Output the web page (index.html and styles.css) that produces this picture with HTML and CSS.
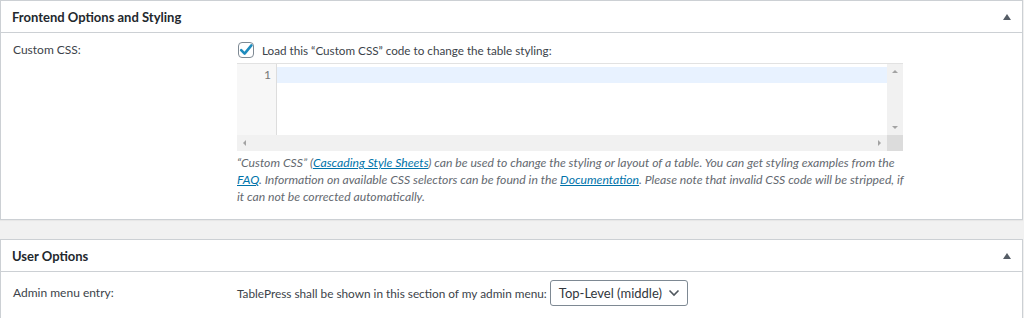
FILE: index.html
```html
<!DOCTYPE html>
<html lang="en">
<head>
    <meta charset="UTF-8">
    <title>TablePress Options</title>
    <link rel="stylesheet" href="styles.css">
</head>
<body>
    <div class="postbox box-frontend">
        <div class="postbox-header">
            <h2>Frontend Options and Styling</h2>
            <span class="toggle-arrow"></span>
        </div>
        <div class="inside">
            <div class="option-row">
                <div class="option-label">Custom CSS:</div>
                <div class="option-value">
                    <label class="check-line">
                        <span class="checkbox">
                            <svg width="16" height="16" viewBox="0 0 16 16"><path d="M3.2 8.2 L6.6 11.6 L13.4 3.4" fill="none" stroke="#1e8cbe" stroke-width="2.6" stroke-linecap="round" stroke-linejoin="round"/></svg>
                        </span>
                        Load this &ldquo;Custom CSS&rdquo; code to change the table styling:
                    </label>
                    <div class="code-editor">
                        <div class="editor-main">
                            <div class="gutter"><div class="line-number">1</div></div>
                            <div class="code-area"><div class="active-line"></div></div>
                            <div class="vscroll">
                                <span class="arrow arrow-up"></span>
                                <span class="arrow arrow-down"></span>
                            </div>
                        </div>
                        <div class="hscroll">
                            <div class="hscroll-track">
                                <span class="arrow arrow-left"></span>
                                <span class="arrow arrow-right"></span>
                            </div>
                            <div class="scroll-corner"></div>
                        </div>
                    </div>
                    <p class="description">
                        &ldquo;Custom CSS&rdquo; (<a href="#">Cascading Style Sheets</a>) can be used to change the styling or layout of a table. You can get styling examples from the<br>
                        <a href="#">FAQ</a>. Information on available CSS selectors can be found in the <a href="#">Documentation</a>. Please note that invalid CSS code will be stripped, if<br>
                        it can not be corrected automatically.
                    </p>
                </div>
            </div>
        </div>
    </div>

    <div class="postbox box-user">
        <div class="postbox-header">
            <h2>User Options</h2>
            <span class="toggle-arrow"></span>
        </div>
        <div class="inside">
            <div class="option-row">
                <div class="option-label">Admin menu entry:</div>
                <div class="option-value select-line">
                    TablePress shall be shown in this section of my admin menu:
                    <span class="select-box">
                        Top-Level (middle)
                        <svg width="12" height="8" viewBox="0 0 12 8"><path d="M1.5 1.5 L6 6 L10.5 1.5" fill="none" stroke="#50575e" stroke-width="1.6"/></svg>
                    </span>
                </div>
            </div>
        </div>
    </div>
</body>
</html>
```

FILE: styles.css
```css
body {
    margin: 0;
    background-color: #f1f1f1;
    font-family: Lato, "Open Sans", sans-serif;
    font-size: 12px;
    color: #444;
}
.postbox {
    background-color: white;
    border: 1px solid #ccd0d4;
    box-shadow: 0 1px 1px rgba(0,0,0,0.04);
    width: 1021px;
}
.box-frontend {
    height: 218px;
    margin-bottom: 19px;
}
.box-user {
    height: 79px;
}
.postbox-header {
    height: 31px;
    border-bottom: 1px solid #ccd0d4;
    display: flex;
    align-items: center;
    justify-content: space-between;
    padding: 0 11px 0 11px;
}
.postbox-header h2 {
    margin: 0;
    font-size: 13px;
    font-weight: 700;
    color: #23282d;
}
.toggle-arrow {
    width: 0;
    height: 0;
    border-left: 4px solid transparent;
    border-right: 4px solid transparent;
    border-bottom: 6px solid #555d66;
    margin-top: 1px;
}
.inside {
    padding: 7px 12px 0 12px;
}
.option-row {
    display: flex;
}
.option-label {
    width: 224px;
    line-height: 20px;
    color: #3c434a;
}
.option-value {
    width: 666px;
}
.check-line {
    display: flex;
    align-items: center;
    height: 20px;
    font-size: 11.7px;
    color: #3c434a;
}
.checkbox {
    width: 16px;
    height: 16px;
    border: 1px solid #7e8993;
    border-radius: 4px;
    margin: 0 8px 0 1px;
    box-sizing: border-box;
    display: flex;
    align-items: center;
    justify-content: center;
}
.checkbox svg {
    flex: none;
}
.code-editor {
    margin-top: 3px;
    height: 88px;
    border-top: 1px solid #e2e2e2;
    display: flex;
    flex-direction: column;
    box-sizing: border-box;
}
.editor-main {
    flex: 1;
    display: flex;
}
.gutter {
    width: 40px;
    background-color: #f7f7f7;
    border-right: 1px solid #ddd;
    box-sizing: border-box;
    padding-top: 3px;
}
.line-number {
    text-align: right;
    padding-right: 5px;
    line-height: 16px;
    font-size: 12px;
    color: #777;
}
.code-area {
    flex: 1;
    padding-top: 3px;
}
.active-line {
    height: 16px;
    background-color: #e8f2ff;
}
.vscroll {
    width: 16px;
    background-color: #f1f1f1;
    position: relative;
}
.hscroll {
    height: 16px;
    display: flex;
}
.hscroll-track {
    flex: 1;
    background-color: #f1f1f1;
    position: relative;
}
.scroll-corner {
    width: 16px;
    background-color: #dcdcdc;
}
.arrow {
    position: absolute;
    width: 0;
    height: 0;
}
.arrow-up {
    left: 5px;
    top: 6px;
    border-left: 3px solid transparent;
    border-right: 3px solid transparent;
    border-bottom: 3px solid #a3a3a3;
}
.arrow-down {
    left: 5px;
    bottom: 6px;
    border-left: 3px solid transparent;
    border-right: 3px solid transparent;
    border-top: 3px solid #a3a3a3;
}
.arrow-left {
    left: 6px;
    top: 5px;
    border-top: 3px solid transparent;
    border-bottom: 3px solid transparent;
    border-right: 3px solid #a3a3a3;
}
.arrow-right {
    right: 6px;
    top: 5px;
    border-top: 3px solid transparent;
    border-bottom: 3px solid transparent;
    border-left: 3px solid #a3a3a3;
}
.description {
    margin: 3px 0 0 0;
    font-size: 12.2px;
    font-style: italic;
    line-height: 17px;
    color: #646970;
    white-space: nowrap;
}
.description a {
    color: #0073aa;
}
.box-user .inside {
    padding-top: 8px;
}
.box-user .option-label {
    line-height: 26px;
}
.select-line {
    display: flex;
    align-items: center;
    font-size: 11.8px;
    color: #3c434a;
    white-space: nowrap;
}
.select-box {
    display: flex;
    align-items: center;
    justify-content: space-between;
    width: 138px;
    height: 26px;
    box-sizing: border-box;
    margin-left: 3px;
    padding: 0 7px 0 8px;
    border: 1px solid #7e8993;
    border-radius: 3px;
    font-size: 13px;
    color: #32373c;
}
```
